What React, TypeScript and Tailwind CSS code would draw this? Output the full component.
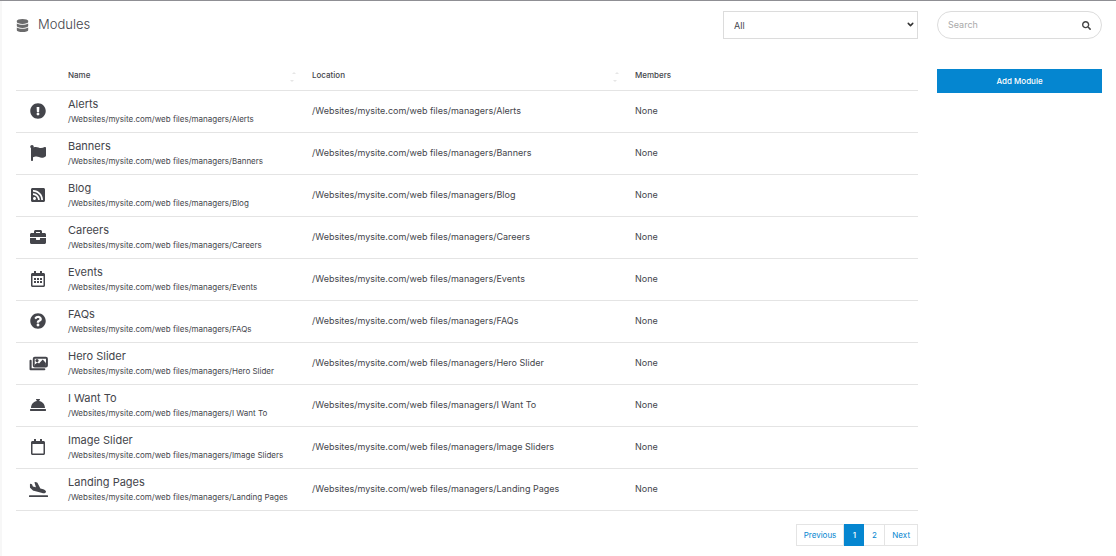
import React from "react";
import {
  FaBriefcase,
  FaConciergeBell,
  FaDatabase,
  FaExclamationCircle,
  FaFlag,
  FaPlaneArrival,
  FaQuestionCircle,
  FaRegCalendar,
  FaRegCalendarAlt,
  FaRssSquare,
  FaSearch,
} from "react-icons/fa";
import { ChevronDown } from "lucide-react";

interface Module {
  name: string;
  folder: string;
  icon: React.ComponentType<{ className?: string }>;
  wideIcon?: boolean;
  members: string;
}

// stacked photos with a heavy outline
const ImagesIcon: React.FC<{ className?: string }> = ({ className }) => (
  <svg viewBox="0 0 18 18" className={className} fill="none" aria-hidden="true">
    <path d="M1.5 6.5V14.5H14.5" stroke="currentColor" strokeWidth="2" strokeLinejoin="round" strokeLinecap="round" />
    <rect x="4.5" y="3.5" width="12.5" height="8.5" rx="1" stroke="currentColor" strokeWidth="1.8" />
    <circle cx="7.6" cy="6.2" r="1.5" fill="currentColor" />
    <path d="M5.5 11.5V10L8 8L9.5 9L13 5.2L16 8.5V11.5Z" fill="currentColor" />
  </svg>
);

const ROOT = "/Websites/mysite.com/web files/managers/";

const modules: Module[] = [
  { name: "Alerts", folder: "Alerts", icon: FaExclamationCircle, members: "None" },
  { name: "Banners", folder: "Banners", icon: FaFlag, members: "None" },
  { name: "Blog", folder: "Blog", icon: FaRssSquare, members: "None" },
  { name: "Careers", folder: "Careers", icon: FaBriefcase, members: "None" },
  { name: "Events", folder: "Events", icon: FaRegCalendarAlt, members: "None" },
  { name: "FAQs", folder: "FAQs", icon: FaQuestionCircle, members: "None" },
  { name: "Hero Slider", folder: "Hero Slider", icon: ImagesIcon, wideIcon: true, members: "None" },
  { name: "I Want To", folder: "I Want To", icon: FaConciergeBell, members: "None" },
  { name: "Image Slider", folder: "Image Sliders", icon: FaRegCalendar, members: "None" },
  { name: "Landing Pages", folder: "Landing Pages", icon: FaPlaneArrival, wideIcon: true, members: "None" },
];

const SortMark = () => (
  <svg viewBox="0 0 6 12" className="w-[6px] h-3 text-[#e6e6e6]" aria-hidden="true">
    <path d="M2 3 L4 1 L6 3 Z M0 9 L4 9 L2 11 Z" fill="currentColor" />
  </svg>
);

const HeaderCell: React.FC<{ label: string; sortable?: boolean }> = ({
  label,
  sortable,
}) => (
  <th scope="col" className="px-2 pt-px text-left font-medium">
    <div className="flex items-center justify-between">
      <span>{label}</span>
      {sortable && (
        <button type="button" aria-label={`Sort by ${label}`} className="pt-1">
          <SortMark />
        </button>
      )}
    </div>
  </th>
);

const ModuleRow: React.FC<{ module: Module }> = ({ module }) => {
  const Icon = module.icon;
  return (
    <tr className="h-[42px] border-b border-[#e4e4e4]">
      <td>
        <Icon className={module.wideIcon ? "mx-auto size-[19px]" : "mx-auto size-4"} />
      </td>
      <td className="px-2">
        <div className="text-[11px] leading-4">{module.name}</div>
        <div className="text-[8px] leading-[14px]">{ROOT + module.folder}</div>
      </td>
      <td className="px-2">{ROOT + module.folder}</td>
      <td className="px-2">{module.members}</td>
    </tr>
  );
};

const Pagination = () => (
  <nav aria-label="Pages" className="mt-[13px] flex justify-end text-[8px] leading-5">
    <a href="#previous" className="border border-[#e4e4e4] px-[7px] text-[#0586d0]">
      Previous
    </a>
    <a
      href="#1"
      aria-current="page"
      className="w-5 border border-[#0586d0] bg-[#0586d0] text-center font-medium text-white"
    >
      1
    </a>
    <a href="#2" className="w-5 border-y border-[#e4e4e4] text-center text-[#0586d0]">
      2
    </a>
    <a href="#next" className="border border-[#e4e4e4] px-[7px] text-[#0586d0]">
      Next
    </a>
  </nav>
);

export default function App() {
  return (
    <div className="min-h-screen border-t border-[#8f8f94] bg-white font-['Inter',sans-serif] text-[#44454b]">
      <div className="flex min-h-screen gap-[19px] border-l-2 border-[#f7f7f7] pt-[10px] pr-[14px] pl-[14px]">
        <main className="min-w-0 flex-1">
          <header className="flex h-7 items-center justify-between">
            <h1 className="flex items-center gap-[9px] text-[13px] font-light">
              <FaDatabase className="size-[13px] text-[#6b6b6c]" />
              Modules
            </h1>
            <div className="relative">
              <select
                aria-label="Filter modules"
                className="h-7 w-[195px] appearance-none border border-[#dcdcdc] bg-white px-[10px] text-[9px]"
              >
                <option>All</option>
              </select>
              <ChevronDown
                strokeWidth={4}
                className="pointer-events-none absolute top-[9px] right-[3px] size-[9px] text-[#333]"
              />
            </div>
          </header>

          <table className="mt-5 w-full table-fixed text-[9px]">
            <colgroup>
              <col className="w-[44px]" />
              <col className="w-[244px]" />
              <col className="w-[323px]" />
              <col />
            </colgroup>
            <thead>
              <tr className="h-[31px] border-b border-[#e4e4e4] text-[8px]">
                <td />
                <HeaderCell label="Name" sortable />
                <HeaderCell label="Location" sortable />
                <HeaderCell label="Members" />
              </tr>
            </thead>
            <tbody>
              {modules.map((module) => (
                <ModuleRow key={module.name} module={module} />
              ))}
            </tbody>
          </table>

          <Pagination />
        </main>

        <aside className="w-[165px] shrink-0">
          <div className="flex h-7 items-center rounded-full border border-[#dcdcdc] px-[10px]">
            <input
              type="text"
              aria-label="Search"
              placeholder="Search"
              className="min-w-0 flex-1 text-[9px] outline-none placeholder:text-[#a9a9a9]"
            />
            <button type="button" aria-label="Run search">
              <FaSearch className="size-[9px] text-[#444]" />
            </button>
          </div>
          <button
            type="button"
            className="mt-[30px] h-6 w-full bg-[#0586d0] text-[8px] font-medium text-white"
          >
            Add Module
          </button>
        </aside>
      </div>
    </div>
  );
}
